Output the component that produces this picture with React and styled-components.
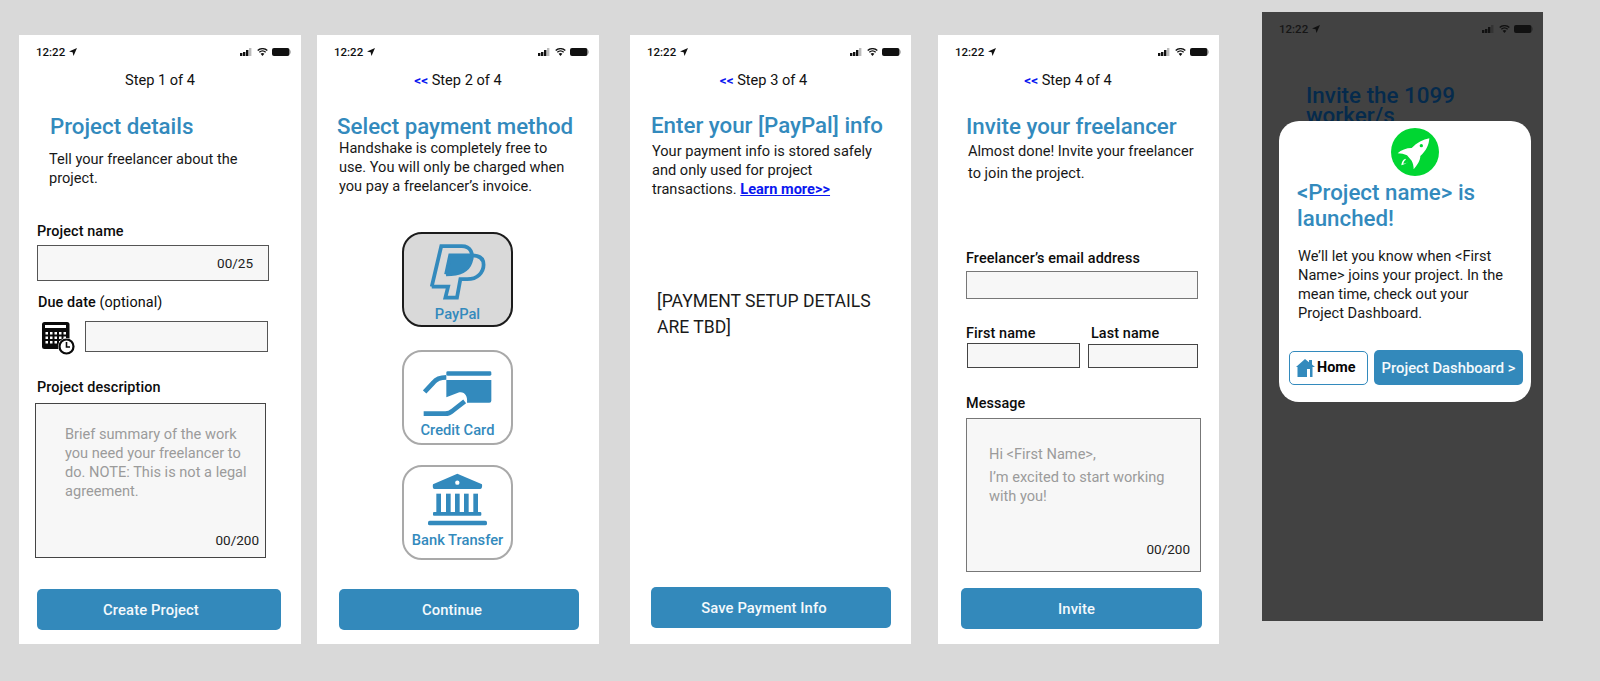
import React from "react";
import styled, { createGlobalStyle } from "styled-components";

const Global = createGlobalStyle`
  html, body { margin: 0; padding: 0; background: #d9d9d9; }
  body { font-family: Roboto, "Liberation Sans", sans-serif; color: #111; overflow: hidden; }
`;

const Canvas = styled.div`
  width: 1600px;
  height: 681px;
  overflow: hidden;
  display: flex;
  align-items: flex-start;
  background: #d9d9d9;
`;

const Phone = styled.section`
  position: relative;
  flex: none;
  width: ${p => p.$w}px;
  height: 609px;
  margin-left: ${p => p.$ml}px;
  margin-top: ${p => p.$mt}px;
  display: flex;
  flex-direction: column;
  background: ${p => (p.$dark ? "#424242" : "#fff")};
  overflow: hidden;
`;

const Status = styled.div`
  height: 34px;
  flex: none;
  padding: 0 10px 0 17px;
  display: flex;
  align-items: center;
  justify-content: space-between;
  font-size: 11.5px;
  font-weight: 500;
  color: ${p => (p.$dark ? "#161616" : "#111")};
`;

const StatusLeft = styled.span`
  display: flex;
  align-items: center;
  gap: 4px;
`;

const StatusRight = styled.span`
  display: flex;
  align-items: center;
  gap: 4px;
`;

const Step = styled.div`
  height: 20px;
  line-height: 20px;
  font-size: 14.6px;
  text-align: center;
  flex: none;
  margin: 1px 0 0 ${p => p.$ml || 0}px;
`;

const Back = styled.span`
  color: #0a17f0;
  font-weight: 700;
  font-size: 13.5px;
`;

const Title = styled.h1`
  margin: ${p => p.$mt}px 0 0 ${p => p.$ml}px;
  font-size: 22.3px;
  line-height: 28px;
  font-weight: 500;
  color: #338abd;
  flex: none;
`;

const Text = styled.p`
  margin: ${p => p.$mt}px 0 0 ${p => p.$ml}px;
  width: ${p => p.$w}px;
  font-size: 14.6px;
  line-height: ${p => p.$lh || 19}px;
  flex: none;
  color: #181818;
`;

const Link = styled.a`
  color: #0a17f0;
  font-weight: 700;
  text-decoration: underline;
`;

const Label = styled.div`
  margin: ${p => p.$mt}px 0 0 ${p => p.$ml}px;
  height: 18px;
  line-height: 18px;
  font-size: 14.4px;
  font-weight: 500;
  letter-spacing: 0.1px;
  color: #0c0c0c;
  flex: none;
`;

const Light = styled.span`
  font-weight: 400;
`;

const Field = styled.div`
  box-sizing: border-box;
  position: relative;
  flex: none;
  width: ${p => p.$w}px;
  height: ${p => p.$h}px;
  margin: ${p => p.$mt || 0}px 0 0 ${p => p.$ml || 0}px;
  background: #f7f7f7;
  border: 1px solid ${p => p.$border || "#555"};
  display: flex;
  align-items: center;
  justify-content: flex-end;
  padding-right: 15px;
  font-size: 13.5px;
  color: #222;
`;

const Area = styled.div`
  box-sizing: border-box;
  flex: none;
  width: ${p => p.$w}px;
  height: ${p => p.$h}px;
  margin: ${p => p.$mt}px 0 0 ${p => p.$ml}px;
  background: #f7f7f7;
  border: 1px solid ${p => p.$border || "#444"};
  padding: ${p => p.$pt}px ${p => p.$pr}px 0 ${p => p.$pl}px;
  display: flex;
  flex-direction: column;
`;

const Hint = styled.div`
  font-size: 14.6px;
  line-height: 19px;
  color: #9b9b9b;
  margin-bottom: ${p => p.$mb || 0}px;
`;

const Counter = styled.div`
  margin-top: auto;
  margin-bottom: ${p => p.$mb}px;
  margin-right: ${p => p.$mr}px;
  text-align: right;
  font-size: 13.5px;
  color: #222;
`;

const Row = styled.div`
  display: flex;
  align-items: ${p => p.$align || "center"};
  flex: none;
  margin: ${p => p.$mt || 0}px 0 0 ${p => p.$ml || 0}px;
  gap: ${p => p.$gap || 0}px;
`;

const NameCol = styled.div`
  width: ${p => p.$w}px;
  flex: none;
`;

const CTA = styled.button`
  box-sizing: border-box;
  flex: none;
  width: ${p => p.$w}px;
  height: 41px;
  margin: auto 0 ${p => p.$mb}px ${p => p.$ml}px;
  padding: 0 ${p => p.$pr}px 0 0;
  border: 0;
  border-radius: 5px;
  background: #3389bb;
  color: #f4f9fc;
  font: 500 14.8px Roboto, sans-serif;
  letter-spacing: 0.1px;
`;

const MethodList = styled.div`
  flex: none;
  margin: 36px 0 0 85px;
  display: flex;
  flex-direction: column;
`;

const Method = styled.div`
  box-sizing: border-box;
  width: 111px;
  height: 95px;
  margin-bottom: ${p => p.$mb || 0}px;
  border-radius: 20px;
  border: ${p => (p.$on ? "2px solid #1c1c1c" : "2px solid #a9a9a9")};
  background: ${p => (p.$on ? "#d9d9d9" : "#fff")};
  display: flex;
  flex-direction: column;
  align-items: center;
  color: #338abd;
  font-size: 14.7px;
  font-weight: 500;
`;

const MethodIcon = styled.svg`
  flex: none;
  margin-top: ${p => p.$mt}px;
  width: ${p => p.$w}px;
  height: ${p => p.$h}px;
`;

const MethodName = styled.div`
  line-height: 18px;
  margin-top: ${p => p.$mt}px;
  white-space: nowrap;
`;

const Tbd = styled.div`
  margin: 89px 0 0 27px;
  width: 230px;
  font-size: 17.6px;
  line-height: 26px;
  color: #1a1a1a;
`;

const DarkTitle = styled.div`
  margin: 39px 0 0 44px;
  width: 170px;
  font-size: 22.4px;
  line-height: 20px;
  font-weight: 500;
  color: #052a4c;
`;

const Modal = styled.div`
  position: absolute;
  left: 17px;
  top: 109px;
  width: 252px;
  height: 281px;
  box-sizing: border-box;
  background: #fff;
  border-radius: 20px;
  display: flex;
  flex-direction: column;
`;

const Rocket = styled.svg`
  width: 48px;
  height: 48px;
  flex: none;
  align-self: center;
  margin: 7px 0 0 19px;
`;

const ModalTitle = styled.h2`
  margin: 3px 0 0 18px;
  font-size: 22.3px;
  line-height: 26px;
  font-weight: 500;
  color: #338abd;
`;

const ModalActions = styled.div`
  display: flex;
  align-items: center;
  gap: 6px;
  margin: 27px 0 0 10px;
`;

const HomeBtn = styled.button`
  box-sizing: border-box;
  width: 79px;
  height: 34px;
  padding: 0 0 0 6px;
  border: 1.5px solid #338abd;
  border-radius: 5px;
  background: #fff;
  display: flex;
  align-items: center;
  gap: 2px;
  font: 700 14.4px Roboto, sans-serif;
  color: #050505;
`;

const DashBtn = styled.button`
  box-sizing: border-box;
  width: 149px;
  height: 35px;
  padding: 0;
  border: 0;
  border-radius: 5px;
  background: #3389bb;
  color: #f4f9fc;
  font: 500 14.8px Roboto, sans-serif;
`;

const CalendarSvg = styled.svg`
  flex: none;
  margin-top: 1px;
  width: 33px;
  height: 33px;
`;

const Bar = ({ dark }) => (
  <Status $dark={dark}>
    <StatusLeft>
      12:22
      <svg width="8" height="8" viewBox="0 0 8 8"><path d="M8 0 L0 3.4 L3.6 4.3 L4.5 8 Z" fill="#111" /></svg>
    </StatusLeft>
    <StatusRight>
      <svg width="13" height="8" viewBox="0 0 13 8">
        <rect x="0" y="5" width="2.4" height="3" fill="#111" />
        <rect x="3" y="4" width="2.4" height="4" fill="#111" />
        <rect x="6" y="2" width="2.4" height="6" fill="#111" />
        <rect x="9" y="0" width="2.4" height="8" fill={dark ? "#333" : "#bbb"} />
      </svg>
      <svg width="11" height="8" viewBox="0 0 11 8">
        <path d="M5.5 8 L3.6 5.8 A3 3 0 0 1 7.4 5.8 Z" fill="#111" />
        <path d="M2.3 4.3 A4.8 4.8 0 0 1 8.7 4.3 M0.7 2.5 A7.2 7.2 0 0 1 10.3 2.5" fill="none" stroke="#111" strokeWidth="1.4" />
      </svg>
      <svg width="19" height="8" viewBox="0 0 19 8">
        <rect x="0" y="0" width="17.5" height="8" rx="2" fill="#111" />
        <rect x="18" y="2.5" width="1" height="3" fill={dark ? "#333" : "#bbb"} />
      </svg>
    </StatusRight>
  </Status>
);

const Calendar = () => (
  <CalendarSvg viewBox="0 0 33 33">
    <rect x="0" y="0" width="27.5" height="27" rx="2.5" fill="#0a0a0a" />
    <rect x="3" y="3" width="21" height="3" fill="#fff" />
    {[10, 14.5, 19].map(y =>
      [3.5, 8, 12.5, 17, 21.5].map(x => <rect key={`${x}-${y}`} x={x} y={y} width="2.5" height="2.5" fill="#fff" />)
    )}
    <circle cx="24.5" cy="24.5" r="8.5" fill="#fff" />
    <circle cx="24.5" cy="24.5" r="7" fill="none" stroke="#0a0a0a" strokeWidth="2.2" />
    <path d="M24.5 20 V25 H28" fill="none" stroke="#0a0a0a" strokeWidth="1.6" />
  </CalendarSvg>
);

const PayPalIcon = () => (
  <MethodIcon $mt={9} $w={58} $h={58} viewBox="150 70 170 170">
    <path d="M213 108 H276 C276 138 258 162 200 162 Z" fill="#338abd" />
    <path d="M158 198 L186 79 H246 C272 79 282 100 272 126 C264 150 244 162 200 162" fill="none" stroke="#338abd" strokeWidth="11" />
    <path d="M158 198 H206 L198 230 H232 L242 176 H262 C292 176 310 156 310 134 C310 116 298 106 276 106 H212 L200 162" fill="none" stroke="#338abd" strokeWidth="11" />
  </MethodIcon>
);

const CardIcon = () => (
  <MethodIcon $mt={19} $w={69} $h={45} viewBox="133 455 207 135">
    <rect x="203" y="456" width="135" height="13" rx="4" fill="#338abd" />
    <path d="M203 482 H338 V544 Q338 550 332 550 H265 C268 528 256 514 238 520 L203 534 Z" fill="#338abd" />
    <path d="M138 518 L164 490 Q176 474 203 474" fill="none" stroke="#338abd" strokeWidth="14" />
    <path d="M135 583 H200 Q212 583 222 574 L258 546" fill="none" stroke="#338abd" strokeWidth="14" />
  </MethodIcon>
);

const BankIcon = () => (
  <MethodIcon $mt={6} $w={59} $h={53} viewBox="150 760 177 159">
    <path d="M238 762 L312 794 Q314 808 306 808 H170 Q162 808 165 794 Z" fill="#338abd" />
    <circle cx="238" cy="789" r="6.5" fill="#fff" />
    {[175, 204, 231, 258, 286].map(x => <rect key={x} x={x} y="822" width="14" height="56" fill="#338abd" />)}
    <rect x="165" y="877" width="145" height="11" rx="3" fill="#338abd" />
    <rect x="150" y="903" width="177" height="14" rx="5" fill="#338abd" />
  </MethodIcon>
);

const HomeIcon = () => (
  <svg width="19" height="18" viewBox="0 0 19 18">
    <path d="M9 0 L13 3.2 V1 H16 V5.6 L19 8 H16.5 V18 H1.5 V8 H0 Z" fill="#338abd" />
    <rect x="11" y="10" width="3" height="8" fill="#fff" />
  </svg>
);

export default function App() {
  return (
    <Canvas>
      <Global />

      <Phone $w={282} $ml={19} $mt={35}>
        <Bar />
        <Step>Step 1 of 4</Step>
        <Title $mt={22} $ml={31}>Project details</Title>
        <Text $mt={10} $ml={30} $w={220}>Tell your freelancer about the project.</Text>
        <Label $mt={35} $ml={18}>Project name</Label>
        <Field $mt={4} $ml={18} $w={232} $h={36}>00/25</Field>
        <Label $mt={13} $ml={19}>Due date <Light>(optional)</Light></Label>
        <Row $mt={9} $ml={23} $align="flex-start" $gap={10}>
          <Calendar />
          <Field $w={183} $h={31} />
        </Row>
        <Label $mt={24} $ml={18}>Project description</Label>
        <Area $mt={6} $ml={16} $w={231} $h={155} $pt={21} $pr={7} $pl={29}>
          <Hint>Brief summary of the work you need your freelancer to do. NOTE: This is not a legal agreement.</Hint>
          <Counter $mb={9} $mr={-1}>00/200</Counter>
        </Area>
        <CTA $ml={18} $w={244} $mb={14} $pr={16}>Create Project</CTA>
      </Phone>

      <Phone $w={282} $ml={16} $mt={35}>
        <Bar />
        <Step><Back>&lt;&lt;</Back> Step 2 of 4</Step>
        <Title $mt={22} $ml={20}>Select payment method</Title>
        <Text $mt={-1} $ml={22} $w={232}>Handshake is completely free to use. You will only be charged when you pay a freelancer’s invoice.</Text>
        <MethodList>
          <Method $on $mb={23}>
            <PayPalIcon />
            <MethodName $mt={4}>PayPal</MethodName>
          </Method>
          <Method $mb={20}>
            <CardIcon />
            <MethodName $mt={5}>Credit Card</MethodName>
          </Method>
          <Method>
            <BankIcon />
            <MethodName $mt={5}>Bank Transfer</MethodName>
          </Method>
        </MethodList>
        <CTA $ml={22} $w={240} $mb={14} $pr={14}>Continue</CTA>
      </Phone>

      <Phone $w={281} $ml={31} $mt={35}>
        <Bar />
        <Step $ml={-14}><Back>&lt;&lt;</Back> Step 3 of 4</Step>
        <Title $mt={21} $ml={21}>Enter your [PayPal] info</Title>
        <Text $mt={3} $ml={22} $w={232}>Your payment info is stored safely and only used for project transactions. <Link>Learn more&gt;&gt;</Link></Text>
        <Tbd>[PAYMENT SETUP DETAILS ARE TBD]</Tbd>
        <CTA $ml={21} $w={240} $mb={16} $pr={14}>Save Payment Info</CTA>
      </Phone>

      <Phone $w={281} $ml={27} $mt={35}>
        <Bar />
        <Step $ml={-21}><Back>&lt;&lt;</Back> Step 4 of 4</Step>
        <Title $mt={22} $ml={28}>Invite your freelancer</Title>
        <Text $mt={0} $ml={30} $w={235} $lh={22}>Almost done! Invite your freelancer to join the project.</Text>
        <Label $mt={66} $ml={28}>Freelancer’s email address</Label>
        <Field $mt={3} $ml={28} $w={232} $h={28} $border="#777" />
        <Row $mt={26} $ml={28} $align="center">
          <NameCol $w={125}><Label $mt={0} $ml={0}>First name</Label></NameCol>
          <Label $mt={0} $ml={0}>Last name</Label>
        </Row>
        <Row $mt={0} $ml={29} $align="flex-end" $gap={8}>
          <Field $w={113} $h={25} $border="#444" />
          <Field $w={110} $h={24} $border="#444" />
        </Row>
        <Label $mt={27} $ml={28}>Message</Label>
        <Area $mt={5} $ml={28} $w={235} $h={154} $pt={26} $pr={30} $pl={22} $border="#777">
          <Hint $mb={4}>Hi &lt;First Name&gt;,</Hint>
          <Hint>I’m excited to start working with you!</Hint>
          <Counter $mb={14} $mr={-20}>00/200</Counter>
        </Area>
        <CTA $ml={23} $w={241} $mb={15} $pr={10}>Invite</CTA>
      </Phone>

      <Phone $w={281} $ml={43} $mt={12} $dark>
        <Bar dark />
        <DarkTitle>Invite the 1099 worker/s</DarkTitle>
        <Modal>
          <Rocket viewBox="0 0 144 144">
            <circle cx="72" cy="72" r="72" fill="#00d632" />
            <path d="M115 31 C96 34 78 44 62 60 C46 60 30 66 20 76 C30 76 40 78 48 82 L62 98 C66 106 68 114 68 124 C78 112 88 98 88 84 C106 68 114 50 115 31 Z" fill="#fff" />
            <circle cx="91" cy="53" r="5" fill="#00d632" />
            <path d="M44 92 C36 94 32 102 31 112 C40 110 48 106 52 100 L48 104 C44 106 40 107 37 107 C38 102 40 98 44 96 Z" fill="#fff" />
          </Rocket>
          <ModalTitle>&lt;Project name&gt; is launched!</ModalTitle>
          <Text $mt={16} $ml={19} $w={215}>We’ll let you know when &lt;First Name&gt; joins your project. In the mean time, check out your Project Dashboard.</Text>
          <ModalActions>
            <HomeBtn><HomeIcon />Home</HomeBtn>
            <DashBtn>Project Dashboard &gt;</DashBtn>
          </ModalActions>
        </Modal>
      </Phone>
    </Canvas>
  );
}
